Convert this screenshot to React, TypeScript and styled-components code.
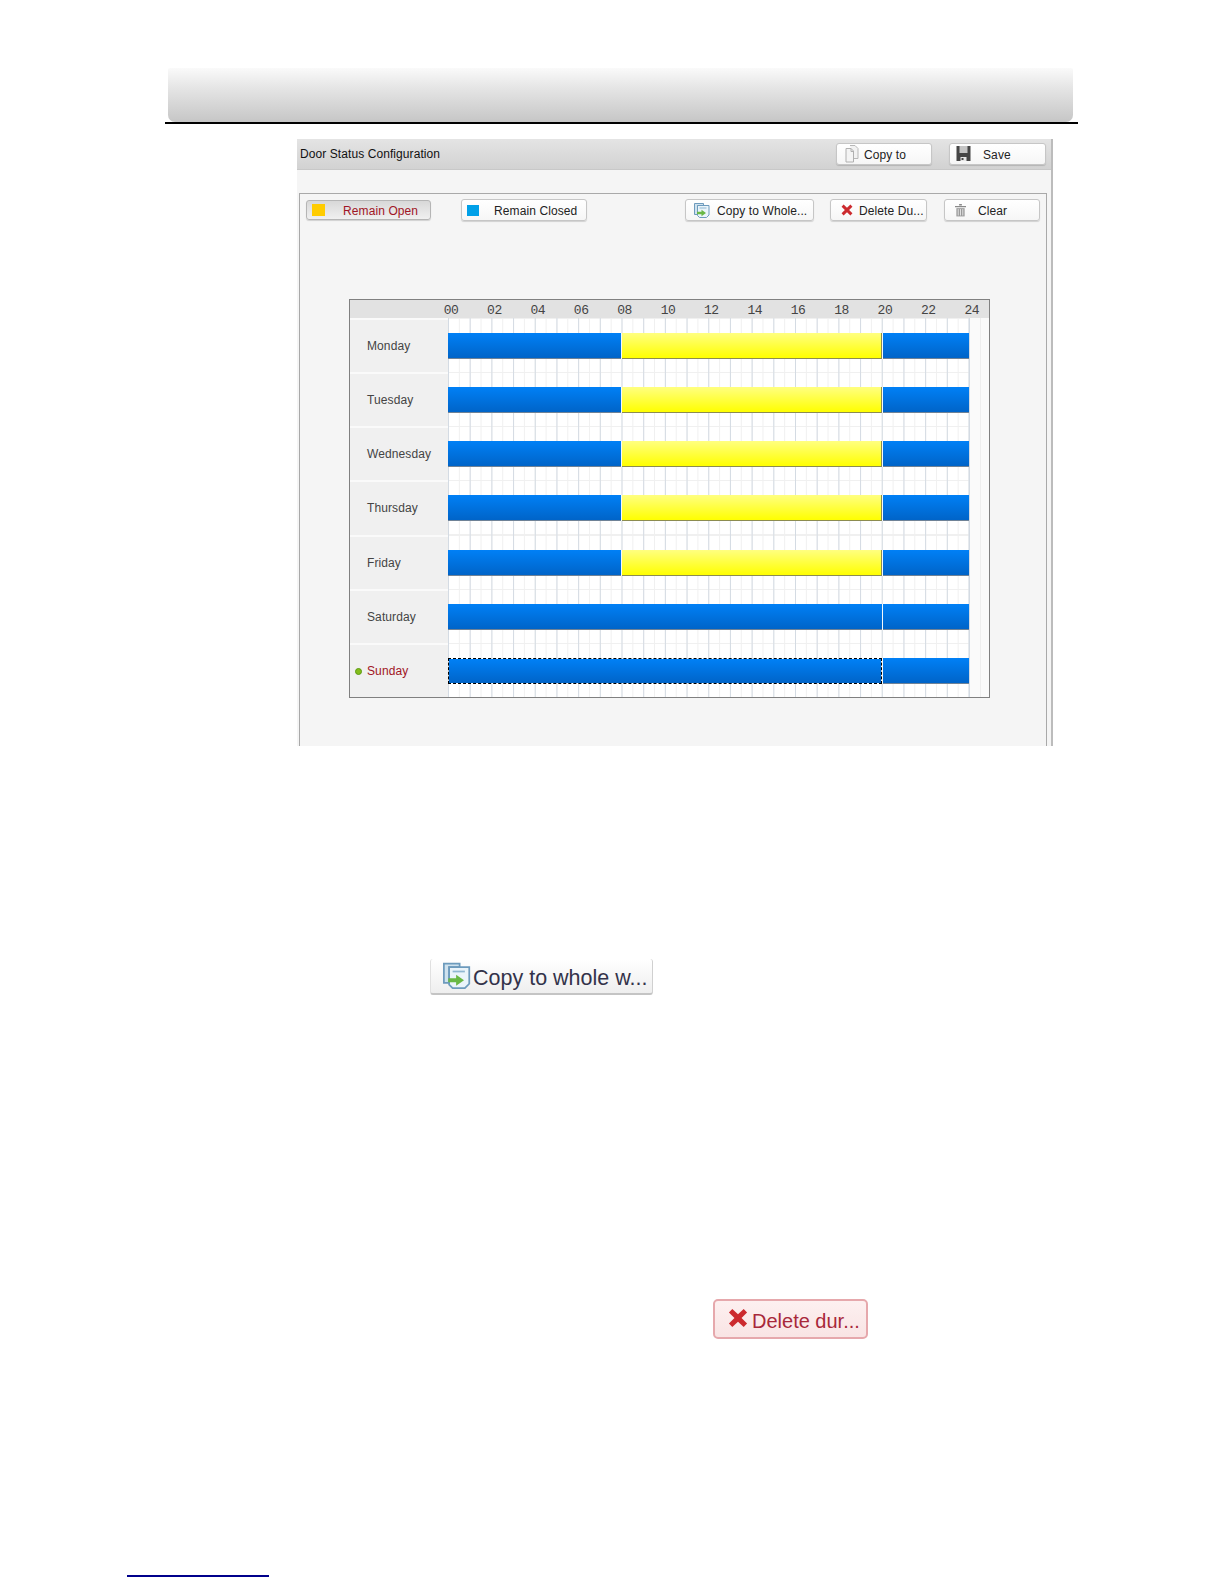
import React from "react";
import styled, { createGlobalStyle, css } from "styled-components";

const Global = createGlobalStyle`
  html, body { margin: 0; padding: 0; background: #fff; }
  body { font-family: "Liberation Sans", Arial, sans-serif; }
`;

const Page = styled.div`
  width: 1224px;
  height: 1584px;
  padding-top: 68px;
  box-sizing: border-box;
  overflow: hidden;
`;

const HeaderBand = styled.div`
  width: 905px;
  height: 54px;
  margin-left: 168px;
  border-radius: 2px 2px 7px 7px;
  background: linear-gradient(#fafafa 0%, #e6e6e6 35%, #c6c6c6 100%);
`;

const Rule = styled.div`
  width: 913px;
  height: 2px;
  margin-left: 165px;
  background: #000;
`;

const Panel = styled.div`
  width: 756px;
  height: 607px;
  margin: 15px 0 0 297px;
  background: #f5f5f5;
  border-right: 2px solid #bcbcbc;
  box-sizing: border-box;
  overflow: hidden;
`;

const TitleBar = styled.div`
  height: 31px;
  display: flex;
  align-items: center;
  padding: 0 5px 0 3px;
  background: linear-gradient(#e4e4e4, #d2d2d2);
  border-bottom: 1px solid #c8c8c8;
  box-sizing: border-box;
`;

const Title = styled.span`
  font-size: 12px;
  letter-spacing: 0.08px;
  color: #111;
  flex: 1;
`;

const TitleActions = styled.div`
  display: flex;
  gap: 17px;
`;

const Frame = styled.div`
  width: 748px;
  height: 553px;
  margin: 23px 0 0 2px;
  border: 1px solid #a9a9a9;
  border-bottom: 0;
  box-sizing: border-box;
`;

const Toolbar = styled.div`
  display: flex;
  align-items: center;
  height: 22px;
  margin-top: 5px;
  padding: 0 6px;
`;

const Spacer = styled.div`
  flex: 1;
`;

const Button = styled.div<{ $w: number; $pad: number; $gap: number; $mr?: number; $active?: boolean }>`
  width: ${(p) => p.$w}px;
  height: 22px;
  margin-right: ${(p) => p.$mr ?? 0}px;
  padding: 1px 0 0 ${(p) => p.$pad}px;
  display: flex;
  align-items: center;
  gap: ${(p) => p.$gap}px;
  box-sizing: border-box;
  flex: none;
  border: 1px solid #c6c6c6;
  border-radius: 3px;
  background: linear-gradient(#ffffff, #f6f6f6);
  box-shadow: 0 1px 1px rgba(0, 0, 0, 0.15);
  font-size: 12px;
  letter-spacing: 0.1px;
  color: #222;
  white-space: nowrap;
  ${(p) =>
    p.$active &&
    css`
      height: 20px;
      border-color: #b5b5b5;
      background: linear-gradient(#d8d8d8, #f0f0f0);
      color: #a01525;
    `}
`;

const Swatch = styled.span<{ $color: string; $w: number; $h: number }>`
  width: ${(p) => p.$w}px;
  height: ${(p) => p.$h}px;
  flex: none;
  margin-top: -1px;
  background: ${(p) => p.$color};
`;

const IconSlot = styled.svg`
  flex: none;
  display: block;
  margin-top: -2px;
`;

const Schedule = styled.div`
  width: 641px;
  height: 399px;
  margin: 78px 0 0 49px;
  border: 1px solid #808080;
  box-sizing: border-box;
  background: #f4f4f4;
`;

const AxisRow = styled.div`
  height: 18px;
  display: flex;
  padding-left: 79.3px;
  background: #e2e2e2;
`;

const AxisTick = styled.span`
  width: 43.4px;
  flex: none;
  text-align: center;
  font-family: "Liberation Mono", monospace;
  font-size: 13px;
  line-height: 21px;
  color: #444;
  letter-spacing: -0.5px;
`;

const Days = styled.div`
  height: 379px;
  display: grid;
  grid-template-rows: repeat(7, 1fr);
`;

const DayRow = styled.div`
  display: flex;
  min-height: 0;
`;

const DayLabel = styled.div<{ $current?: boolean }>`
  width: 98px;
  flex: none;
  display: flex;
  align-items: center;
  padding-left: 17px;
  box-sizing: border-box;
  position: relative;
  background: #f0f0f0;
  border-top: 2px solid #fafafa;
  font-size: 12px;
  letter-spacing: 0.1px;
  color: ${(p) => (p.$current ? "#a01525" : "#444")};
`;

const Dot = styled.span`
  position: absolute;
  left: 5px;
  top: 50%;
  width: 5px;
  height: 5px;
  margin-top: -3px;
  border-radius: 50%;
  background: #84bd1c;
  border: 1px solid #5c9a10;
`;

const Track = styled.div`
  flex: 1;
  padding-top: 15px;
  box-sizing: border-box;
  background-color: #fff;
  background-image:
    linear-gradient(90deg, transparent 521px, #d4dbe3 521px, #d4dbe3 522px, #fafafa 522px, #fafafa 532px, #eeeeee 532px, #eeeeee 533px, #fafafa 533px),
    linear-gradient(90deg, #d4dbe3 1px, transparent 1px),
    linear-gradient(90deg, #f0f0f0 1px, transparent 1px),
    linear-gradient(#f0f0f0 1px, transparent 1px);
  background-size: 100% 100%, 21.7px 100%, 10.85px 100%, 100% 27px;
  display: flex;
  align-items: flex-start;
`;

const Segment = styled.div<{ $kind: "blue" | "yellow"; $w: number; $focus?: boolean }>`
  width: ${(p) => p.$w}px;
  height: 26px;
  flex: none;
  box-sizing: border-box;
  border-bottom: 1px solid #6f8296;
  ${(p) =>
    p.$kind === "blue"
      ? css`
          background: linear-gradient(#0080f6, #0064c8);
        `
      : css`
          background: linear-gradient(#ffff80, #ffff00);
          border-bottom: 1px solid #8c8c50;
          border-right: 1px solid #8c8c50;
        `}
  ${(p) =>
    p.$focus &&
    css`
      border: 1px dashed #000;
      background-clip: padding-box;
    `}
`;

const Sep = styled.div`
  width: 1px;
  height: 26px;
  flex: none;
  background: #f4f8fb;
`;

const SampleCopy = styled.div`
  width: 223px;
  height: 36px;
  margin: 213px 0 0 430px;
  display: flex;
  align-items: center;
  padding-left: 12px;
  gap: 2px;
  box-sizing: border-box;
  border-bottom: 2px solid #c4c4c4;
  border-right: 1px solid #d0d0d0;
  border-left: 1px solid #e0e0e0;
  border-radius: 3px;
  background: linear-gradient(#ffffff, #eeeeee);
  font-size: 21.5px;
  color: #33334a;
  white-space: nowrap;
`;

const SampleDelete = styled.div`
  width: 155px;
  height: 40px;
  margin: 304px 0 0 713px;
  display: flex;
  align-items: center;
  padding-left: 13px;
  gap: 4px;
  box-sizing: border-box;
  border: 2px solid #e6a8ac;
  border-radius: 5px;
  background: linear-gradient(#fdf0f0, #f9e4e4);
  font-size: 20px;
  color: #a8283a;
  white-space: nowrap;
`;

const SampleText = styled.span`
  margin-top: 5px;
`;

const FooterLink = styled.div`
  width: 142px;
  height: 2px;
  margin: 236px 0 0 127px;
  background: #00008b;
`;

const CopyDocIcon = () => (
  <IconSlot width="14" height="18" viewBox="0 0 14 18">
    <path d="M5 .5h5l3 3v10H9" fill="#f2f2f2" stroke="#b8b8b8" />
    <path d="M1 3.500h5l2.500 2.500v11H1z" fill="#f4f4f4" stroke="#b0b0b0" />
    <path d="M6 3.500V6.500h2.500" fill="none" stroke="#b0b0b0" />
  </IconSlot>
);

const SaveIcon = () => (
  <IconSlot width="15" height="15" viewBox="0 0 14 15">
    <path d="M0 0h14v15H0z" fill="#454545" />
    <path d="M3 0h8v7H3z" fill="#c4c4c4" />
    <path d="M4 11h6v4H4z" fill="#e6e6e6" />
    <path d="M5 12h2v2H5z" fill="#454545" />
  </IconSlot>
);

const CopyWholeIcon: React.FC<{ size?: number }> = ({ size = 16 }) => (
  <IconSlot width={size} height={size} viewBox="0 0 16 16">
    <path d="M.5 1.500h9v2h-6v9h-3z" fill="#cfe2ee" stroke="#6d9bbd" />
    <path d="M3.500 3.500h11.500v9.500l-2.500 2.500H5.500l-2-2z" fill="#eaf4fa" stroke="#6d9bbd" />
    <path d="M5.500 6h7" stroke="#8fb7d2" />
    <path d="M3 9.800h4.500V7.800l4.500 3.200-4.500 3.200v-2H3z" fill="#69b845" />
  </IconSlot>
);

const CrossIcon: React.FC<{ size?: number }> = ({ size = 12 }) => (
  <IconSlot width={size} height={size} viewBox="0 0 13 13">
    <path d="M2.800.6 6.500 4.100 10.200.6l2.200 2.300-3.600 3.600 3.600 3.600-2.200 2.300-3.700-3.500-3.700 3.500-2.200-2.300 3.600-3.600L.6 2.900z" fill="#cc2a2e" />
  </IconSlot>
);

const TrashIcon = () => (
  <IconSlot width="11" height="14" viewBox="0 0 12 14">
    <path d="M4.500.5h3v1.500h-3zM0 2.500h12V4H0z" fill="#8a8a8a" />
    <path d="M1.500 5h9v9h-9z" fill="#9a9a9a" />
    <path d="M3.500 6v7M6 6v7M8.500 6v7" stroke="#e8e8e8" />
  </IconSlot>
);

const hours = ["00", "02", "04", "06", "08", "10", "12", "14", "16", "18", "20", "22", "24"];

const days: { name: string; kind: "work" | "sat" | "sun" }[] = [
  { name: "Monday", kind: "work" },
  { name: "Tuesday", kind: "work" },
  { name: "Wednesday", kind: "work" },
  { name: "Thursday", kind: "work" },
  { name: "Friday", kind: "work" },
  { name: "Saturday", kind: "sat" },
  { name: "Sunday", kind: "sun" },
];

const Bars: React.FC<{ kind: "work" | "sat" | "sun" }> = ({ kind }) => {
  if (kind === "work") {
    return (
      <>
        <Segment $kind="blue" $w={173} />
        <Sep />
        <Segment $kind="yellow" $w={260} />
        <Sep />
        <Segment $kind="blue" $w={86} />
      </>
    );
  }
  return (
    <>
      <Segment $kind="blue" $w={434} $focus={kind === "sun"} />
      <Sep />
      <Segment $kind="blue" $w={86} />
    </>
  );
};

export default function App() {
  return (
    <>
      <Global />
      <Page>
        <HeaderBand />
        <Rule />
        <Panel>
          <TitleBar>
            <Title>Door Status Configuration</Title>
            <TitleActions>
              <Button $w={96} $pad={8} $gap={5}>
                <CopyDocIcon />
                Copy to
              </Button>
              <Button $w={97} $pad={6} $gap={12}>
                <SaveIcon />
                Save
              </Button>
            </TitleActions>
          </TitleBar>
          <Frame>
            <Toolbar>
              <Button $w={125} $pad={5} $gap={18} $mr={30} $active>
                <Swatch $color="#ffcc00" $w={13} $h={12} />
                Remain Open
              </Button>
              <Button $w={126} $pad={5} $gap={15}>
                <Swatch $color="#00a0e8" $w={12} $h={11} />
                Remain Closed
              </Button>
              <Spacer />
              <Button $w={129} $pad={8} $gap={7} $mr={16}>
                <CopyWholeIcon />
                Copy to Whole...
              </Button>
              <Button $w={97} $pad={10} $gap={6} $mr={17}>
                <CrossIcon />
                Delete Du...
              </Button>
              <Button $w={96} $pad={10} $gap={12}>
                <TrashIcon />
                Clear
              </Button>
            </Toolbar>
            <Schedule>
              <AxisRow>
                {hours.map((h) => (
                  <AxisTick key={h}>{h}</AxisTick>
                ))}
              </AxisRow>
              <Days>
                {days.map((d) => (
                  <DayRow key={d.name}>
                    <DayLabel $current={d.kind === "sun"}>
                      {d.kind === "sun" && <Dot />}
                      {d.name}
                    </DayLabel>
                    <Track>
                      <Bars kind={d.kind} />
                    </Track>
                  </DayRow>
                ))}
              </Days>
            </Schedule>
          </Frame>
        </Panel>
        <SampleCopy>
          <CopyWholeIcon size={28} />
          <SampleText>Copy to whole w...</SampleText>
        </SampleCopy>
        <SampleDelete>
          <CrossIcon size={20} />
          <SampleText>Delete dur...</SampleText>
        </SampleDelete>
        <FooterLink />
      </Page>
    </>
  );
}
